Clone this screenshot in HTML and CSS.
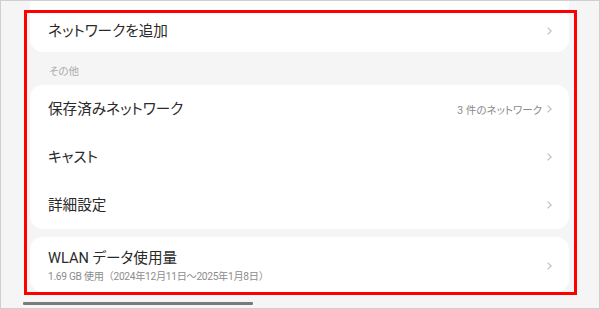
FILE: index.html
```html
<!DOCTYPE html>
<html lang="ja">
<head>
<meta charset="utf-8">
<link rel="stylesheet" href="styles.css">
</head>
<body>
<div class="frame">
  <div class="content">
    <div class="card card-top">
      <div class="row row-first">
        <span class="title">ネットワークを追加</span>
        <svg class="chev" viewBox="0 0 5 8"><path d="M0.6 0.6 L4.2 4 L0.6 7.4"/></svg>
      </div>
    </div>
    <div class="section">その他</div>
    <div class="card">
      <div class="row">
        <span class="title">保存済みネットワーク</span>
        <span class="right"><span class="value">3 件のネットワーク</span><svg class="chev" viewBox="0 0 5 8"><path d="M0.6 0.6 L4.2 4 L0.6 7.4"/></svg></span>
      </div>
      <div class="row">
        <span class="title">キャスト</span>
        <svg class="chev" viewBox="0 0 5 8"><path d="M0.6 0.6 L4.2 4 L0.6 7.4"/></svg>
      </div>
      <div class="row">
        <span class="title">詳細設定</span>
        <svg class="chev" viewBox="0 0 5 8"><path d="M0.6 0.6 L4.2 4 L0.6 7.4"/></svg>
      </div>
    </div>
    <div class="card card-last">
      <div class="row row-two">
        <div class="texts">
          <span class="title">WLAN データ使用量</span>
          <span class="sub">1.69 GB 使用（2024年12月11日～2025年1月8日）</span>
        </div>
        <svg class="chev" viewBox="0 0 5 8"><path d="M0.6 0.6 L4.2 4 L0.6 7.4"/></svg>
      </div>
    </div>
  </div>
  <div class="scrollbar"></div>
  <div class="highlight"></div>
</div>
</body>
</html>
```

FILE: styles.css
```css
html, body {
  margin: 0;
  padding: 0;
}
body {
  font-family: Roboto, "Noto Sans CJK JP", sans-serif;
  font-feature-settings: "palt";
}
.frame {
  position: relative;
  width: 600px;
  height: 309px;
  box-sizing: border-box;
  border: 1px solid #cfcfcf;
  background: #f5f5f5;
  overflow: hidden;
}
.content {
  display: flex;
  flex-direction: column;
  padding: 0 30px 0 29px;
}
.card {
  background: #ffffff;
  border-radius: 13px;
  display: flex;
  flex-direction: column;
}
.card-top {
  margin-top: -20px;
  padding-top: 20px;
  border-radius: 0 0 13px 13px;
}
.row {
  height: 48px;
  display: flex;
  align-items: center;
  justify-content: space-between;
  padding: 0 17px 0 18px;
}
.row-first {
  height: 42px;
  padding-top: 9px;
}
.title {
  font-size: 14.6px;
  line-height: 20px;
  color: #2a2a2a;
}
.chev {
  width: 5px;
  height: 8px;
  fill: none;
  stroke: #bdbdbd;
  stroke-width: 1.1;
  flex: none;
}
.right {
  display: flex;
  align-items: center;
  gap: 5px;
}
.value {
  font-size: 10.5px;
  color: #8a8a8a;
}
.section {
  padding: 12px 0 5px 19px;
  font-size: 10.5px;
  line-height: 16px;
  color: #ababab;
}
.card-last {
  margin-top: 8px;
}
.row-two {
  height: 55px;
  box-sizing: border-box;
  padding-top: 11px;
  padding-bottom: 8px;
}
.texts {
  display: flex;
  flex-direction: column;
  gap: 2px;
}
.sub {
  font-size: 10.2px;
  line-height: 14px;
  letter-spacing: -0.3px;
  color: #8c8c8c;
  font-feature-settings: normal;
}
.scrollbar {
  position: absolute;
  left: 22px;
  top: 301px;
  width: 230px;
  height: 3px;
  background: #7a7a7a;
  border-radius: 1px;
}
.highlight {
  position: absolute;
  left: 23px;
  top: 9px;
  width: 553px;
  height: 285px;
  box-sizing: border-box;
  border: 3px solid #ff0000;
}
```
